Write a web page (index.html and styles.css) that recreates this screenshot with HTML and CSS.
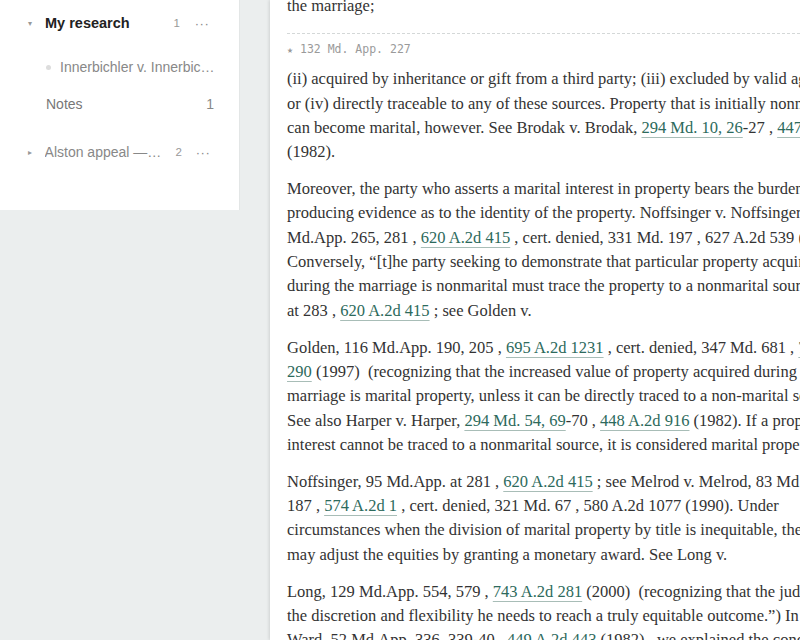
FILE: index.html
```html
<!DOCTYPE html>
<html lang="en">
<head>
    <meta charset="UTF-8">
    <meta name="viewport" content="width=device-width, initial-scale=1.0">
    <title>Innerbichler v. Innerbichler</title>
    <link rel="stylesheet" href="styles.css">
</head>
<body>

<div class="app">
    <aside class="sidebar">
        <div class="row folder open">
            <span class="caret">&#9662;</span>
            <span class="label strong">My research</span>
            <span class="count">1</span>
            <span class="more">&middot;&middot;&middot;</span>
        </div>
        <div class="row item">
            <span class="dot"></span>
            <span class="label">Innerbichler v. Innerbichler</span>
        </div>
        <div class="row notes">
            <span class="label">Notes</span>
            <span class="count">1</span>
        </div>
        <div class="row folder closed">
            <span class="caret">&#9656;</span>
            <span class="label">Alston appeal — remand</span>
            <span class="count">2</span>
            <span class="more">&middot;&middot;&middot;</span>
        </div>
    </aside>

    <main class="doc">
        <div class="doc-body">
            <p class="first">the marriage;</p>

            <div class="page-mark"><span class="star">&#9733;</span> 132 Md. App. 227</div>

            <p>(ii) acquired by inheritance or gift from a third party; (iii) excluded by valid agreement;<br>
            or (iv) directly traceable to any of these sources. Property that is initially nonmarital<br>
            can become marital, however. See Brodak v. Brodak, <a href="#">294 Md. 10, 26</a>-27 , <a href="#">447 A.2d 847</a><br>
            (1982).</p>

            <p>Moreover, the party who asserts a marital interest in property bears the burden of<br>
            producing evidence as to the identity of the property. Noffsinger v. Noffsinger, 95<br>
            Md.App. 265, 281 , <a href="#">620 A.2d 415</a> , cert. denied, 331 Md. 197 , 627 A.2d 539 (1993).<br>
            Conversely, “[t]he party seeking to demonstrate that particular property acquired<br>
            during the marriage is nonmarital must trace the property to a nonmarital source.” Id.<br>
            at 283 , <a href="#">620 A.2d 415</a> ; see Golden v.</p>

            <p>Golden, 116 Md.App. 190, 205 , <a href="#">695 A.2d 1231</a> , cert. denied, 347 Md. 681 , <a href="#">702 A.2d</a><br>
            <a href="#">290</a> (1997) &nbsp;(recognizing that the increased value of property acquired during the<br>
            marriage is marital property, unless it can be directly traced to a non-marital source).<br>
            See also Harper v. Harper, <a href="#">294 Md. 54, 69</a>-70 , <a href="#">448 A.2d 916</a> (1982). If a property<br>
            interest cannot be traced to a nonmarital source, it is considered marital property.</p>

            <p>Noffsinger, 95 Md.App. at 281 , <a href="#">620 A.2d 415</a> ; see Melrod v. Melrod, 83 Md.App. 180,<br>
            187 , <a href="#">574 A.2d 1</a> , cert. denied, 321 Md. 67 , 580 A.2d 1077 (1990). Under<br>
            circumstances when the division of marital property by title is inequitable, the court<br>
            may adjust the equities by granting a monetary award. See Long v.</p>

            <p>Long, 129 Md.App. 554, 579 , <a href="#">743 A.2d 281</a> (2000) &nbsp;(recognizing that the judge needs<br>
            the discretion and flexibility he needs to reach a truly equitable outcome.”) In<br>
            Ward, 52 Md.App. 336, 339-40 , <a href="#">449 A.2d 443</a> (1982), &nbsp;we explained the concept</p>
        </div>
    </main>
</div>

</body>
</html>
```

FILE: styles.css
```css
html, body { margin: 0; padding: 0; height: 100%; }
body { background: #ebeeee; font-family: "Liberation Sans", Arial, sans-serif; overflow: hidden; }

.app { display: flex; align-items: flex-start; gap: 30px; height: 100%; }

/* sidebar tree */
.sidebar { width: 239px; flex: none; background: #fff; border-right: 1px solid #e3e6e6; padding: 8px 0 43px; }
.row { display: flex; align-items: center; height: 30px; padding-left: 28px; padding-right: 25px; color: #777; font-size: 14px; }
.row .label { flex: 1; white-space: nowrap; overflow: hidden; text-overflow: ellipsis; }
.row .strong { font-weight: bold; color: #222; font-size: 14.5px; }
.caret { width: 17px; font-size: 8px; color: #999; }
.count { font-size: 11.5px; color: #999; }
.more { width: 24px; margin-left: 10px; text-align: center; font-size: 13px; color: #888; letter-spacing: 0.5px; }
.row.item { margin-top: 14px; padding-left: 46px; padding-right: 20px; color: #888; }
.row.item .label { max-width: 159px; }
.dot { width: 5px; height: 5px; border-radius: 50%; background: #ddd; margin-right: 9px; }
.row.notes { margin-top: 7px; padding-left: 46px; }
.row.notes .count { font-size: 14px; color: #888; }
.row.closed { margin-top: 18px; color: #888; }
.row.closed .caret { width: 18px; }
.row.closed .label { flex: none; width: 120px; margin-right: 11px; }

/* document */
.doc { flex: 1; align-self: stretch; background: #fff; box-shadow: -1px 0 3px rgba(0,0,0,0.12); overflow: hidden; }
.doc-body { padding-left: 17px; font-family: "Liberation Serif", "Times New Roman", serif; font-size: 16.5px; line-height: 24.3px; color: #333; white-space: nowrap; }
.doc-body p { margin: 0 0 12.7px; }
.doc-body p.first { margin-top: -6px; margin-bottom: 15px; }
.doc-body a { color: #2d6a5c; text-decoration: underline; text-decoration-color: #a8bdb7; text-underline-offset: 4px; text-decoration-thickness: 1px; }

.page-mark { border-top: 1px dashed #d4d8d8; padding: 8px 0 0; margin-bottom: 10px; font-family: "DejaVu Sans Mono", "Liberation Mono", monospace; font-size: 11.5px; line-height: 15px; color: #9a9a9a; }
.page-mark .star { font-size: 10px; vertical-align: 0; }
```
